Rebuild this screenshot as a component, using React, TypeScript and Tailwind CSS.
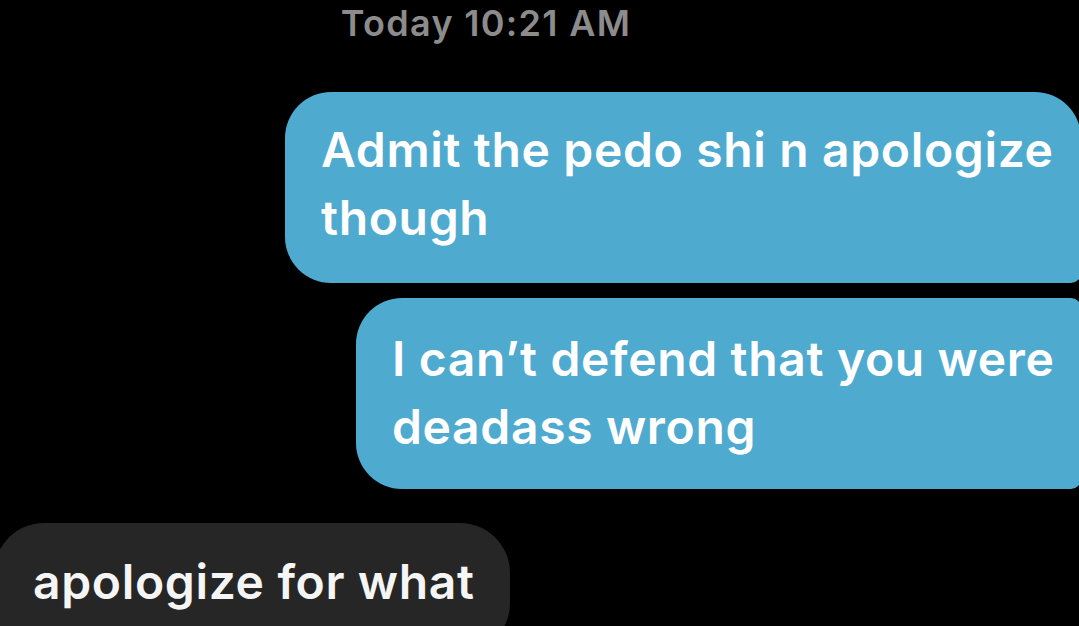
import React from "react";

const font = { fontFamily: "Inter, 'Noto Sans', sans-serif" };

export default function App() {
    return (
        <div className="w-[1079px] h-[626px] bg-black overflow-hidden" style={font}>
            <div className="flex flex-col">
                <div className="h-[50px] flex items-start justify-center">
                    <span className="ml-[-107px] mt-[1px] text-[36px] leading-[44px] font-semibold text-[#8c8c8c] tracking-[1.3px]">
                        Today 10:21 AM
                    </span>
                </div>
                <div className="flex flex-col items-end pt-[42px]">
                    <div className="w-[796px] mr-[-2px] bg-[#4eaacf] text-white rounded-[46px] rounded-br-[10px] pl-[36px] pt-[24px] pb-[31px] text-[48px] leading-[68px] font-semibold tracking-[0.65px] whitespace-nowrap">
                        Admit the pedo shi n apologize
                        <br />
                        though
                    </div>
                    <div className="mt-[15px] w-[725px] mr-[-2px] bg-[#4eaacf] text-white rounded-[46px] rounded-tr-[10px] rounded-br-[10px] pl-[36px] pt-[27px] pb-[28px] text-[48px] leading-[68px] font-semibold tracking-[0.65px] whitespace-nowrap">
                        I can’t defend that you were
                        <br />
                        deadass wrong
                    </div>
                </div>
                <div className="flex pt-[34px]">
                    <div className="ml-[-6px] w-[516px] h-[130px] bg-[#262626] text-[#f5f5f5] rounded-[50px] pl-[39px] pt-[25px] text-[48px] leading-[68px] font-semibold tracking-[0.65px] whitespace-nowrap">
                        apologize for what
                    </div>
                </div>
            </div>
        </div>
    );
}
